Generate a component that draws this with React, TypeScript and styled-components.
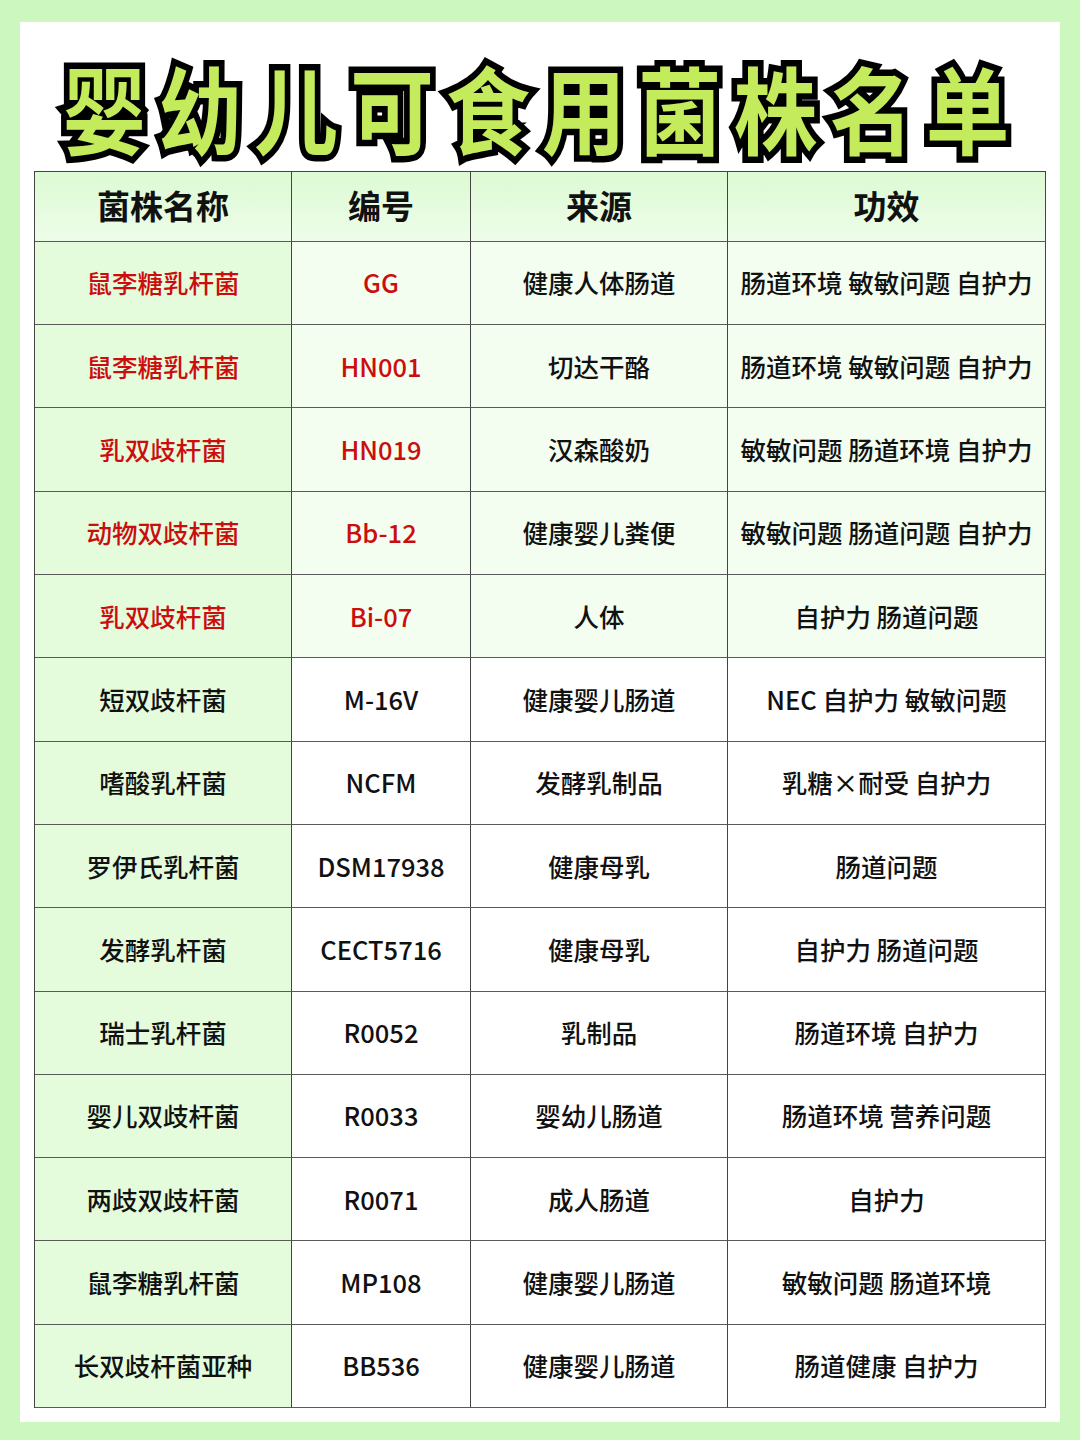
import React from "react";
import styled, { createGlobalStyle } from "styled-components";

const GlobalStyle = createGlobalStyle`
  html, body {
    margin: 0;
    padding: 0;
    background: #ccf8c0;
  }
  body {
    font-family: "Noto Sans CJK SC", "Noto Sans", sans-serif;
  }
`;

const Page = styled.div`
  width: 1080px;
  height: 1440px;
  box-sizing: border-box;
  padding: 22px 20px 18px;
  background: #ccf8c0;
`;

const Card = styled.div`
  background: #ffffff;
  height: 100%;
  box-sizing: border-box;
  padding: 0 14px 14px;
  display: flex;
  flex-direction: column;
`;

const TitleBar = styled.div`
  height: 150px;
  display: flex;
  align-items: center;
  justify-content: center;
  padding-top: 20px;
  box-sizing: border-box;
`;

const Title = styled.h1`
  margin: 0;
  font-family: "Noto Sans CJK SC", sans-serif;
  font-weight: 700;
  font-size: 95px;
  letter-spacing: 14px;
  line-height: 1;
  white-space: nowrap;
  color: #c4eb5c;
  -webkit-text-stroke: 13px #000;
  paint-order: stroke fill;
  transform: translateX(-5px) scaleX(0.88);
  margin-right: -14px;
`;

const Table = styled.div`
  border-top: 1.5px solid #444;
  border-left: 1.5px solid #444;
  display: flex;
  flex-direction: column;
`;

const Row = styled.div<{ $head?: boolean; $tint?: boolean }>`
  display: grid;
  grid-template-columns: 257px 179px 257px 1fr;
  height: ${(p) => (p.$head ? "70px" : "83.3px")};
  box-sizing: border-box;
  background: ${(p) =>
    p.$head
      ? "linear-gradient(180deg, #dcfad3 0%, #eefdea 100%)"
      : p.$tint
      ? "#f3fdf0"
      : "#ffffff"};
`;

const Cell = styled.div<{ $head?: boolean; $red?: boolean; $first?: boolean }>`
  display: flex;
  align-items: center;
  justify-content: center;
  border-right: 1.5px solid #444;
  border-bottom: 1.5px solid #5a5a5a;
  box-sizing: border-box;
  white-space: nowrap;
  font-size: ${(p) => (p.$head ? 33 : 25.5)}px;
  font-weight: ${(p) => (p.$head ? 700 : 500)};
  color: ${(p) => (p.$red ? "#cc0d0d" : "#111")};
  background: ${(p) => (p.$first && !p.$head ? "#e4fbdc" : "transparent")};
  padding-bottom: 2px;
`;

type Strain = [string, string, string, string];

const rows: Strain[] = [
  ["鼠李糖乳杆菌", "GG", "健康人体肠道", "肠道环境 敏敏问题 自护力"],
  ["鼠李糖乳杆菌", "HN001", "切达干酪", "肠道环境 敏敏问题 自护力"],
  ["乳双歧杆菌", "HN019", "汉森酸奶", "敏敏问题 肠道环境 自护力"],
  ["动物双歧杆菌", "Bb-12", "健康婴儿粪便", "敏敏问题 肠道问题 自护力"],
  ["乳双歧杆菌", "Bi-07", "人体", "自护力 肠道问题"],
  ["短双歧杆菌", "M-16V", "健康婴儿肠道", "NEC 自护力 敏敏问题"],
  ["嗜酸乳杆菌", "NCFM", "发酵乳制品", "乳糖×耐受 自护力"],
  ["罗伊氏乳杆菌", "DSM17938", "健康母乳", "肠道问题"],
  ["发酵乳杆菌", "CECT5716", "健康母乳", "自护力 肠道问题"],
  ["瑞士乳杆菌", "R0052", "乳制品", "肠道环境 自护力"],
  ["婴儿双歧杆菌", "R0033", "婴幼儿肠道", "肠道环境 营养问题"],
  ["两歧双歧杆菌", "R0071", "成人肠道", "自护力"],
  ["鼠李糖乳杆菌", "MP108", "健康婴儿肠道", "敏敏问题 肠道环境"],
  ["长双歧杆菌亚种", "BB536", "健康婴儿肠道", "肠道健康 自护力"],
];

export default function App() {
  return (
    <>
      <GlobalStyle />
      <Page>
        <Card>
          <TitleBar>
            <Title>婴幼儿可食用菌株名单</Title>
          </TitleBar>
          <Table>
            <Row $head>
              <Cell $head>菌株名称</Cell>
              <Cell $head>编号</Cell>
              <Cell $head>来源</Cell>
              <Cell $head>功效</Cell>
            </Row>
            {rows.map((r, i) => {
              const red = i < 5;
              return (
                <Row key={i} $tint={red}>
                  <Cell $first $red={red}>{r[0]}</Cell>
                  <Cell $red={red}>{r[1]}</Cell>
                  <Cell>{r[2]}</Cell>
                  <Cell>{r[3]}</Cell>
                </Row>
              );
            })}
          </Table>
        </Card>
      </Page>
    </>
  );
}
